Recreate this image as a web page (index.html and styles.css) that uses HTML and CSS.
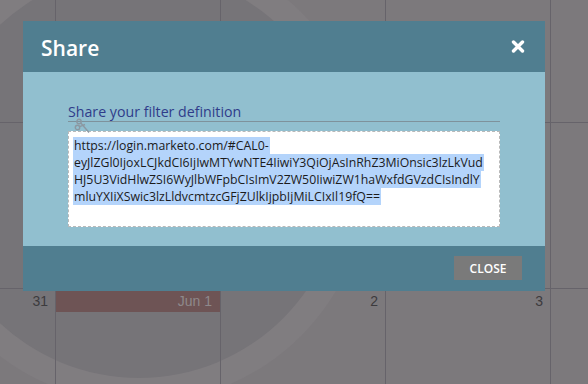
FILE: index.html
```html
<!DOCTYPE html>
<html>
<head>
<meta charset="utf-8">
<link rel="stylesheet" href="styles.css">
</head>
<body>
<div class="stage">
  <div class="spinner"></div>
  <div class="calendar">
    <div class="cell"></div><div class="cell"></div><div class="cell"></div><div class="cell"></div><div class="cell last"></div>
    <div class="cell"></div><div class="cell"></div><div class="cell"></div><div class="cell"></div><div class="cell last"></div>
    <div class="cell day">31</div>
    <div class="cell day ev"><div class="event">Jun 1</div></div>
    <div class="cell day">2</div>
    <div class="cell day">3</div>
    <div class="cell day last"></div>
  </div>

  <div class="modal">
    <div class="modal-head">
      <h1 class="modal-title">Share</h1>
      <button class="modal-x" aria-label="Close">
        <svg width="14" height="13" viewBox="0 0 14 13"><path d="M2.5 2 L11.5 11 M11.5 2 L2.5 11" stroke="#fff" stroke-width="3.4" stroke-linecap="round"/></svg>
      </button>
    </div>
    <div class="modal-body">
      <div class="field-label">Share your filter definition</div>
      <svg class="scissors" width="17" height="17" viewBox="0 0 17 17">
        <g fill="none" stroke="#8b98a2" stroke-width="1.4">
          <circle cx="5" cy="3.5" r="2.2"/>
          <circle cx="3.5" cy="9.5" r="2.2"/>
          <path d="M6.8 5 L15 14.5 M5.6 8.6 L11 6.5"/>
        </g>
      </svg>
      <div class="share-box">
        <div class="ln"><span class="sel">https://login.marketo.com/#CAL0-</span></div>
        <div class="ln"><span class="sel">eyJlZGl0IjoxLCJkdCI6IjIwMTYwNTE4IiwiY3QiOjAsInRhZ3MiOnsic3lzLkVud</span></div>
        <div class="ln"><span class="sel">HJ5U3VidHlwZSI6WyJlbWFpbCIsImV2ZW50IiwiZW1haWxfdGVzdCIsIndlY</span></div>
        <div class="ln"><span class="sel">mluYXIiXSwic3lzLldvcmtzcGFjZUlkIjpbIjMiLCIxIl19fQ==</span></div>
      </div>
    </div>
    <div class="modal-foot">
      <button class="btn-close">CLOSE</button>
    </div>
  </div>
</div>
</body>
</html>
```

FILE: styles.css
```css
html, body {
  margin: 0;
  padding: 0;
}
body {
  width: 588px;
  height: 384px;
  overflow: hidden;
  background: #7c797c;
}
.stage {
  position: relative;
  width: 588px;
  height: 384px;
  overflow: hidden;
}
.spinner {
  position: absolute;
  left: -65px;
  top: -30px;
  width: 408px;
  height: 408px;
  border-radius: 50%;
  background: #767478;
  box-shadow: 0 0 0 25px #807d80;
}
.calendar {
  position: relative;
  display: grid;
  grid-template-columns: 56px 165px 165px 165px 37px;
  grid-template-rows: 123px 166px 95px;
  font-family: "Liberation Sans", Arial, sans-serif;
}
.cell {
  border-right: 1px solid #66636a;
  border-bottom: 1px solid #66636a;
}
.cell.last {
  border-right: none;
}
.day {
  border-bottom: none;
  padding: 2px 7px 0 0;
  text-align: right;
  font-size: 14px;
  line-height: 21px;
  color: #3c3b3e;
}
.day.ev {
  padding-right: 0;
}
.event {
  background: #6e5455;
  color: #8e898b;
  padding-right: 8px;
  height: 21px;
}

.modal {
  position: absolute;
  left: 23px;
  top: 21px;
  width: 522px;
  font-family: "Open Sans", sans-serif;
}
.modal-head {
  height: 51px;
  background: #507e90;
  display: flex;
  align-items: center;
  justify-content: space-between;
  padding: 0 20px 0 18px;
}
.modal-title {
  margin: 0;
  font-size: 21px;
  font-weight: 600;
  color: #fff;
  line-height: 24px;
  padding-top: 2px;
}
.modal-x {
  border: none;
  background: none;
  padding: 0;
  width: 14px;
  height: 13px;
  display: block;
}
.modal-x svg {
  display: block;
}
.modal-body {
  position: relative;
  height: 174px;
  box-sizing: border-box;
  background: #91bfcf;
  padding: 31px 45px 0;
}
.field-label {
  font-size: 14.2px;
  line-height: 18px;
  color: #2f3c8a;
  border-bottom: 1px solid #7e929c;
}
.scissors {
  position: absolute;
  left: 51px;
  top: 46px;
}
.share-box {
  margin-top: 9px;
  height: 96px;
  box-sizing: border-box;
  background: #fff;
  border: 1px dashed #b9b9b9;
  padding: 5px 4px;
  font-size: 12.3px;
  line-height: 17px;
  color: #1b1b1b;
  white-space: nowrap;
}
.sel {
  background: #b4d4fb;
  padding: 0 1px;
}
.modal-foot {
  height: 45px;
  background: #507e90;
  display: flex;
  justify-content: flex-end;
  align-items: flex-start;
  padding: 10px 23px 0 0;
  box-sizing: border-box;
}
.btn-close {
  width: 68px;
  height: 24px;
  border: none;
  background: #7a7a7a;
  color: #fff;
  font-family: "Open Sans", sans-serif;
  font-size: 12px;
  font-weight: 600;
  padding: 0;
}
```
